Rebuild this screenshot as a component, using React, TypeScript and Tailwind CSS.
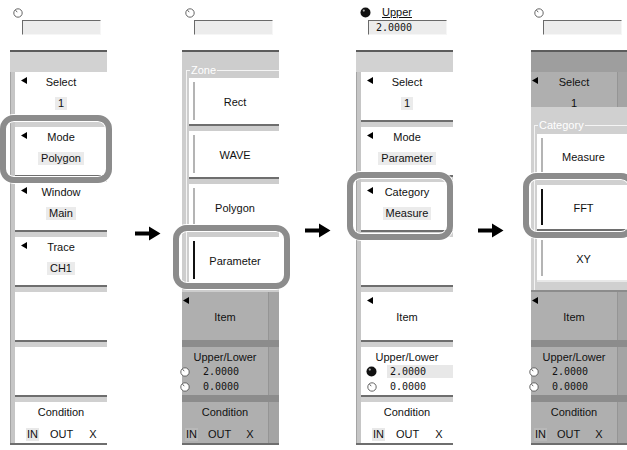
import React from "react";

const SANS = "font-['Liberation_Sans',Arial,sans-serif]";
const MONO = "font-['DejaVu_Sans_Mono',monospace]";

function Knob() {
  return (
    <svg width="10" height="10" viewBox="0 0 10 10" className="shrink-0">
      <circle cx="5" cy="5" r="4.2" fill="white" stroke="#555" strokeWidth="0.9" />
      <path d="M2.6 2.2 L4.2 4.2" stroke="#555" strokeWidth="0.9" />
    </svg>
  );
}

function Ball() {
  return (
    <svg width="11" height="11" viewBox="0 0 11 11" className="shrink-0">
      <circle cx="5.5" cy="5.5" r="5" fill="#111" />
      <circle cx="3.8" cy="3.6" r="1.1" fill="#aaa" />
    </svg>
  );
}

function Tri() {
  return (
    <svg width="6" height="7" viewBox="0 0 6 7" className="absolute left-[6px] top-[5px]">
      <polygon points="6,0 6,7 0,3.5" fill="#000" />
    </svg>
  );
}

function TriDim() {
  return (
    <svg width="6" height="7" viewBox="0 0 6 7" className="absolute left-[1px] top-[5px]">
      <polygon points="6,0 6,7 0,3.5" fill="#000" />
    </svg>
  );
}

function Arrow() {
  return (
    <svg width="26" height="15" viewBox="0 0 26 15">
      <path d="M0 5.5 H14 V0.5 L25.5 7.5 L14 14.5 V9.5 H0 Z" fill="#000" />
    </svg>
  );
}

function InputBox({ children }: { children?: React.ReactNode }) {
  return (
    <div className="w-[79px] h-[15px] bg-[#ececec] border-t border-l border-t-[#6a6a6a] border-l-[#6a6a6a] border-r border-b border-r-[#f6f6f6] border-b-[#f6f6f6] flex items-center pl-[7px]">
      {children}
    </div>
  );
}

function TopKnob() {
  return (
    <div className="h-[50px] bg-white flex flex-col pl-[3px] pt-[8px]">
      <Knob />
      <div className="ml-[9px] mt-[2px]">
        <InputBox />
      </div>
    </div>
  );
}

function TopUpper() {
  return (
    <div className="h-[50px] bg-white flex flex-col pl-[4px] pt-[6px]">
      <div className="flex items-center h-[12px]">
        <Ball />
        <span className="ml-[11px] text-[11px] leading-[12px] underline text-[#111]">Upper</span>
      </div>
      <div className="ml-[8px] mt-[2px]">
        <InputBox>
          <span className={`${MONO} text-[10px] leading-[12px] text-[#111]`}>2.0000</span>
        </InputBox>
      </div>
    </div>
  );
}

function Sep() {
  return (
    <>
      <div className="h-[2px] bg-[#6e6e6e]" />
      <div className="h-[5px] bg-[#d0d0d0]" />
    </>
  );
}

function SepDim() {
  return <div className="h-[7px] bg-[#8c8c8c]" />;
}

function MenuCell({ label, value }: { label: string; value?: string }) {
  return (
    <div className="relative h-[48px] bg-white flex flex-col items-center">
      <Tri />
      <div className="pt-[3px] leading-[14px]">{label}</div>
      {value ? <div className="mt-[8px] leading-[13px] px-[3px] bg-[#ebebeb]">{value}</div> : null}
    </div>
  );
}

function EmptyCell() {
  return <div className="h-[48px] bg-white" />;
}

function ItemCell() {
  return (
    <div className="relative h-[48px] bg-white flex items-center justify-center">
      <Tri />
      <div className="leading-[14px] pt-[2px]">Item</div>
    </div>
  );
}

function ULCell() {
  return (
    <div className="h-[48px] bg-white flex flex-col">
      <div className="pt-[3px] leading-[14px] text-center">Upper/Lower</div>
      <div className="flex items-center h-[15px] pl-[5px]">
        <Ball />
        <div className={`${MONO} ml-[10px] flex-1 bg-[#e8e8e8] pl-[3px] text-[10px] leading-[13px]`}>2.0000</div>
      </div>
      <div className="flex items-center h-[15px] pl-[5px]">
        <div className="w-[11px] flex justify-center">
          <Knob />
        </div>
        <div className={`${MONO} ml-[10px] flex-1 pl-[3px] text-[10px] leading-[13px]`}>0.0000</div>
      </div>
    </div>
  );
}

function CondCell() {
  return (
    <div className="h-[41px] bg-white flex flex-col">
      <div className="pt-[3px] leading-[14px] text-center">Condition</div>
      <div className="mt-[9px] flex items-center leading-[13px] pl-[11px]">
        <span className="bg-[#e8e8e8] px-[1px]">IN</span>
        <span className="ml-[11px]">OUT</span>
        <span className="ml-[16px]">X</span>
      </div>
    </div>
  );
}

function Highlight({ className }: { className: string }) {
  return (
    <div
      className={`absolute pointer-events-none border-[6px] border-[#8c8c8c] rounded-[14px] shadow-[0_0_0_1px_#ffffff,inset_0_0_0_1px_#ffffff] ${className}`}
    />
  );
}

function NormalPanel({
  top,
  cells,
  highlight,
}: {
  top: React.ReactNode;
  cells: React.ReactNode;
  highlight: React.ReactNode;
}) {
  return (
    <div className="relative w-[97px] shrink-0 flex flex-col">
      {top}
      <div className="h-[2px] bg-[#5c5c5c]" />
      <div className="h-[20px] bg-[#d2d2d2]" />
      <div className="flex">
        <div className="w-[5px] bg-[#c6c6c6] border-l border-l-[#a4a4a4]" />
        <div className="flex-1 flex flex-col">{cells}</div>
      </div>
      <div className="h-[2px] bg-[#6e6e6e]" />
      {highlight}
    </div>
  );
}

/* dimmed menu (behind a pop-up group box) */
function DimCell({ children, h = "h-[48px]" }: { children?: React.ReactNode; h?: string }) {
  return (
    <div className="flex">
      <div className={`relative w-[86px] bg-[#afafaf] ${h}`}>{children}</div>
      <div className="flex-1 bg-[#a4a4a4] border-l border-l-[#959595]" />
    </div>
  );
}

function DimMenu({ showSelect }: { showSelect: boolean }) {
  return (
    <div className="flex flex-col bg-[#9e9e9e]">
      <div className="h-[20px] bg-[#9e9e9e]" />
      <DimCell>
        {showSelect ? (
          <>
            <TriDim />
            <div className="pt-[3px] leading-[14px] text-center">Select</div>
            <div className="mt-[8px] leading-[13px] text-center">1</div>
          </>
        ) : null}
      </DimCell>
      <SepDim />
      <DimCell />
      <SepDim />
      <DimCell />
      <SepDim />
      <DimCell />
      <SepDim />
      <DimCell>
        <TriDim />
        <div className="h-full flex items-center justify-center pt-[2px] leading-[14px]">Item</div>
      </DimCell>
      <SepDim />
      <DimCell>
        <div className="pt-[3px] leading-[14px] text-center">Upper/Lower</div>
        <div className="flex items-center h-[15px] ml-[-2px]">
          <Knob />
          <span className={`${MONO} ml-[13px] text-[10px] leading-[13px]`}>2.0000</span>
        </div>
        <div className="flex items-center h-[15px] ml-[-2px]">
          <Knob />
          <span className={`${MONO} ml-[13px] text-[10px] leading-[13px]`}>0.0000</span>
        </div>
      </DimCell>
      <SepDim />
      <DimCell h="h-[41px]">
        <div className="pt-[3px] leading-[14px] text-center">Condition</div>
        <div className="mt-[9px] flex items-center leading-[13px] pl-[3px]">
          <span className="bg-[#b8b8b8] px-[1px]">IN</span>
          <span className="ml-[10px]">OUT</span>
          <span className="ml-[15px]">X</span>
        </div>
      </DimCell>
      <div className="h-[2px] bg-[#6e6e6e]" />
    </div>
  );
}

function GroupButton({ label, selected, h }: { label: string; selected?: boolean; h: string }) {
  return (
    <div className={`bg-white flex ${h} py-[4px] pl-[4px]`}>
      <div className={selected ? "w-[2px] bg-[#111]" : "w-[2px] bg-[#b4b4b4]"} />
      <div className="flex-1 flex items-center justify-center pt-[2px] pr-[4px]">{label}</div>
    </div>
  );
}

function GroupSep() {
  return (
    <>
      <div className="h-[2px] bg-[#6e6e6e]" />
      <div className="h-[5px]" />
    </>
  );
}

function ZonePanel() {
  return (
    <div className="relative w-[97px] shrink-0 flex flex-col">
      <TopKnob />
      <div className="h-[2px] bg-[#5c5c5c]" />
      <DimMenu showSelect={false} />
      {/* pop-up group box */}
      <div className="absolute left-0 right-0 top-[52px] h-[240px] bg-[#cdcdcd] pt-[18px] pl-[4px]">
        <div className="relative h-[218px] border-l border-t border-l-[#f4f4f4] border-t-[#f4f4f4] pl-[2px] pt-[7px]">
          <span className="absolute left-[3px] top-[-8px] px-[1px] bg-[#cdcdcd] text-white leading-[14px]">Zone</span>
          <GroupButton label="Rect" h="h-[46px]" />
          <GroupSep />
          <GroupButton label="WAVE" h="h-[46px]" />
          <GroupSep />
          <GroupButton label="Polygon" h="h-[46px]" />
          <GroupSep />
          <GroupButton label="Parameter" selected h="h-[46px]" />
          <div className="h-[2px] bg-[#6e6e6e]" />
        </div>
      </div>
      <Highlight className="left-[-9px] top-[225px] w-[117px] h-[64px]" />
    </div>
  );
}

function CategoryPanel() {
  return (
    <div className="relative w-[97px] shrink-0 flex flex-col">
      <TopKnob />
      <div className="h-[2px] bg-[#5c5c5c]" />
      <DimMenu showSelect={true} />
      <div className="absolute left-0 right-0 top-[107px] h-[183px] bg-[#d0d0d0] pt-[18px] pl-[3px]">
        <div className="relative h-[165px] border-l border-t border-l-[#f4f4f4] border-t-[#f4f4f4] pl-[2px] pt-[8px]">
          <span className="absolute left-[3px] top-[-8px] px-[1px] bg-[#d0d0d0] text-white leading-[14px]">Category</span>
          <GroupButton label="Measure" h="h-[44px]" />
          <GroupSep />
          <GroupButton label="FFT" selected h="h-[44px]" />
          <GroupSep />
          <GroupButton label="XY" h="h-[44px]" />
          <div className="h-[2px] bg-[#e8e8e8]" />
        </div>
      </div>
      <Highlight className="left-[-8px] top-[173px] w-[112px] h-[65px]" />
    </div>
  );
}

export default function App() {
  return (
    <div className={`${SANS} text-[11px] text-[#111] w-[627px] h-[450px] bg-white overflow-hidden flex`}>
      <div className="w-[10px] shrink-0" />
      <NormalPanel
        top={<TopKnob />}
        cells={
          <>
            <MenuCell label="Select" value="1" />
            <Sep />
            <MenuCell label="Mode" value="Polygon" />
            <Sep />
            <MenuCell label="Window" value="Main" />
            <Sep />
            <MenuCell label="Trace" value="CH1" />
            <Sep />
            <EmptyCell />
            <Sep />
            <EmptyCell />
            <Sep />
            <CondCell />
          </>
        }
        highlight={<Highlight className="left-[-10px] top-[115px] w-[112px] h-[68px]" />}
      />
      <div className="w-[75px] shrink-0 pl-[28px] pt-[226px]">
        <Arrow />
      </div>
      <ZonePanel />
      <div className="w-[77px] shrink-0 pl-[26px] pt-[223px]">
        <Arrow />
      </div>
      <NormalPanel
        top={<TopUpper />}
        cells={
          <>
            <MenuCell label="Select" value="1" />
            <Sep />
            <MenuCell label="Mode" value="Parameter" />
            <Sep />
            <MenuCell label="Category" value="Measure" />
            <Sep />
            <EmptyCell />
            <Sep />
            <ItemCell />
            <Sep />
            <ULCell />
            <Sep />
            <CondCell />
          </>
        }
        highlight={<Highlight className="left-[-9px] top-[172px] w-[106px] h-[68px]" />}
      />
      <div className="w-[78px] shrink-0 pl-[25px] pt-[223px]">
        <Arrow />
      </div>
      <CategoryPanel />
    </div>
  );
}
